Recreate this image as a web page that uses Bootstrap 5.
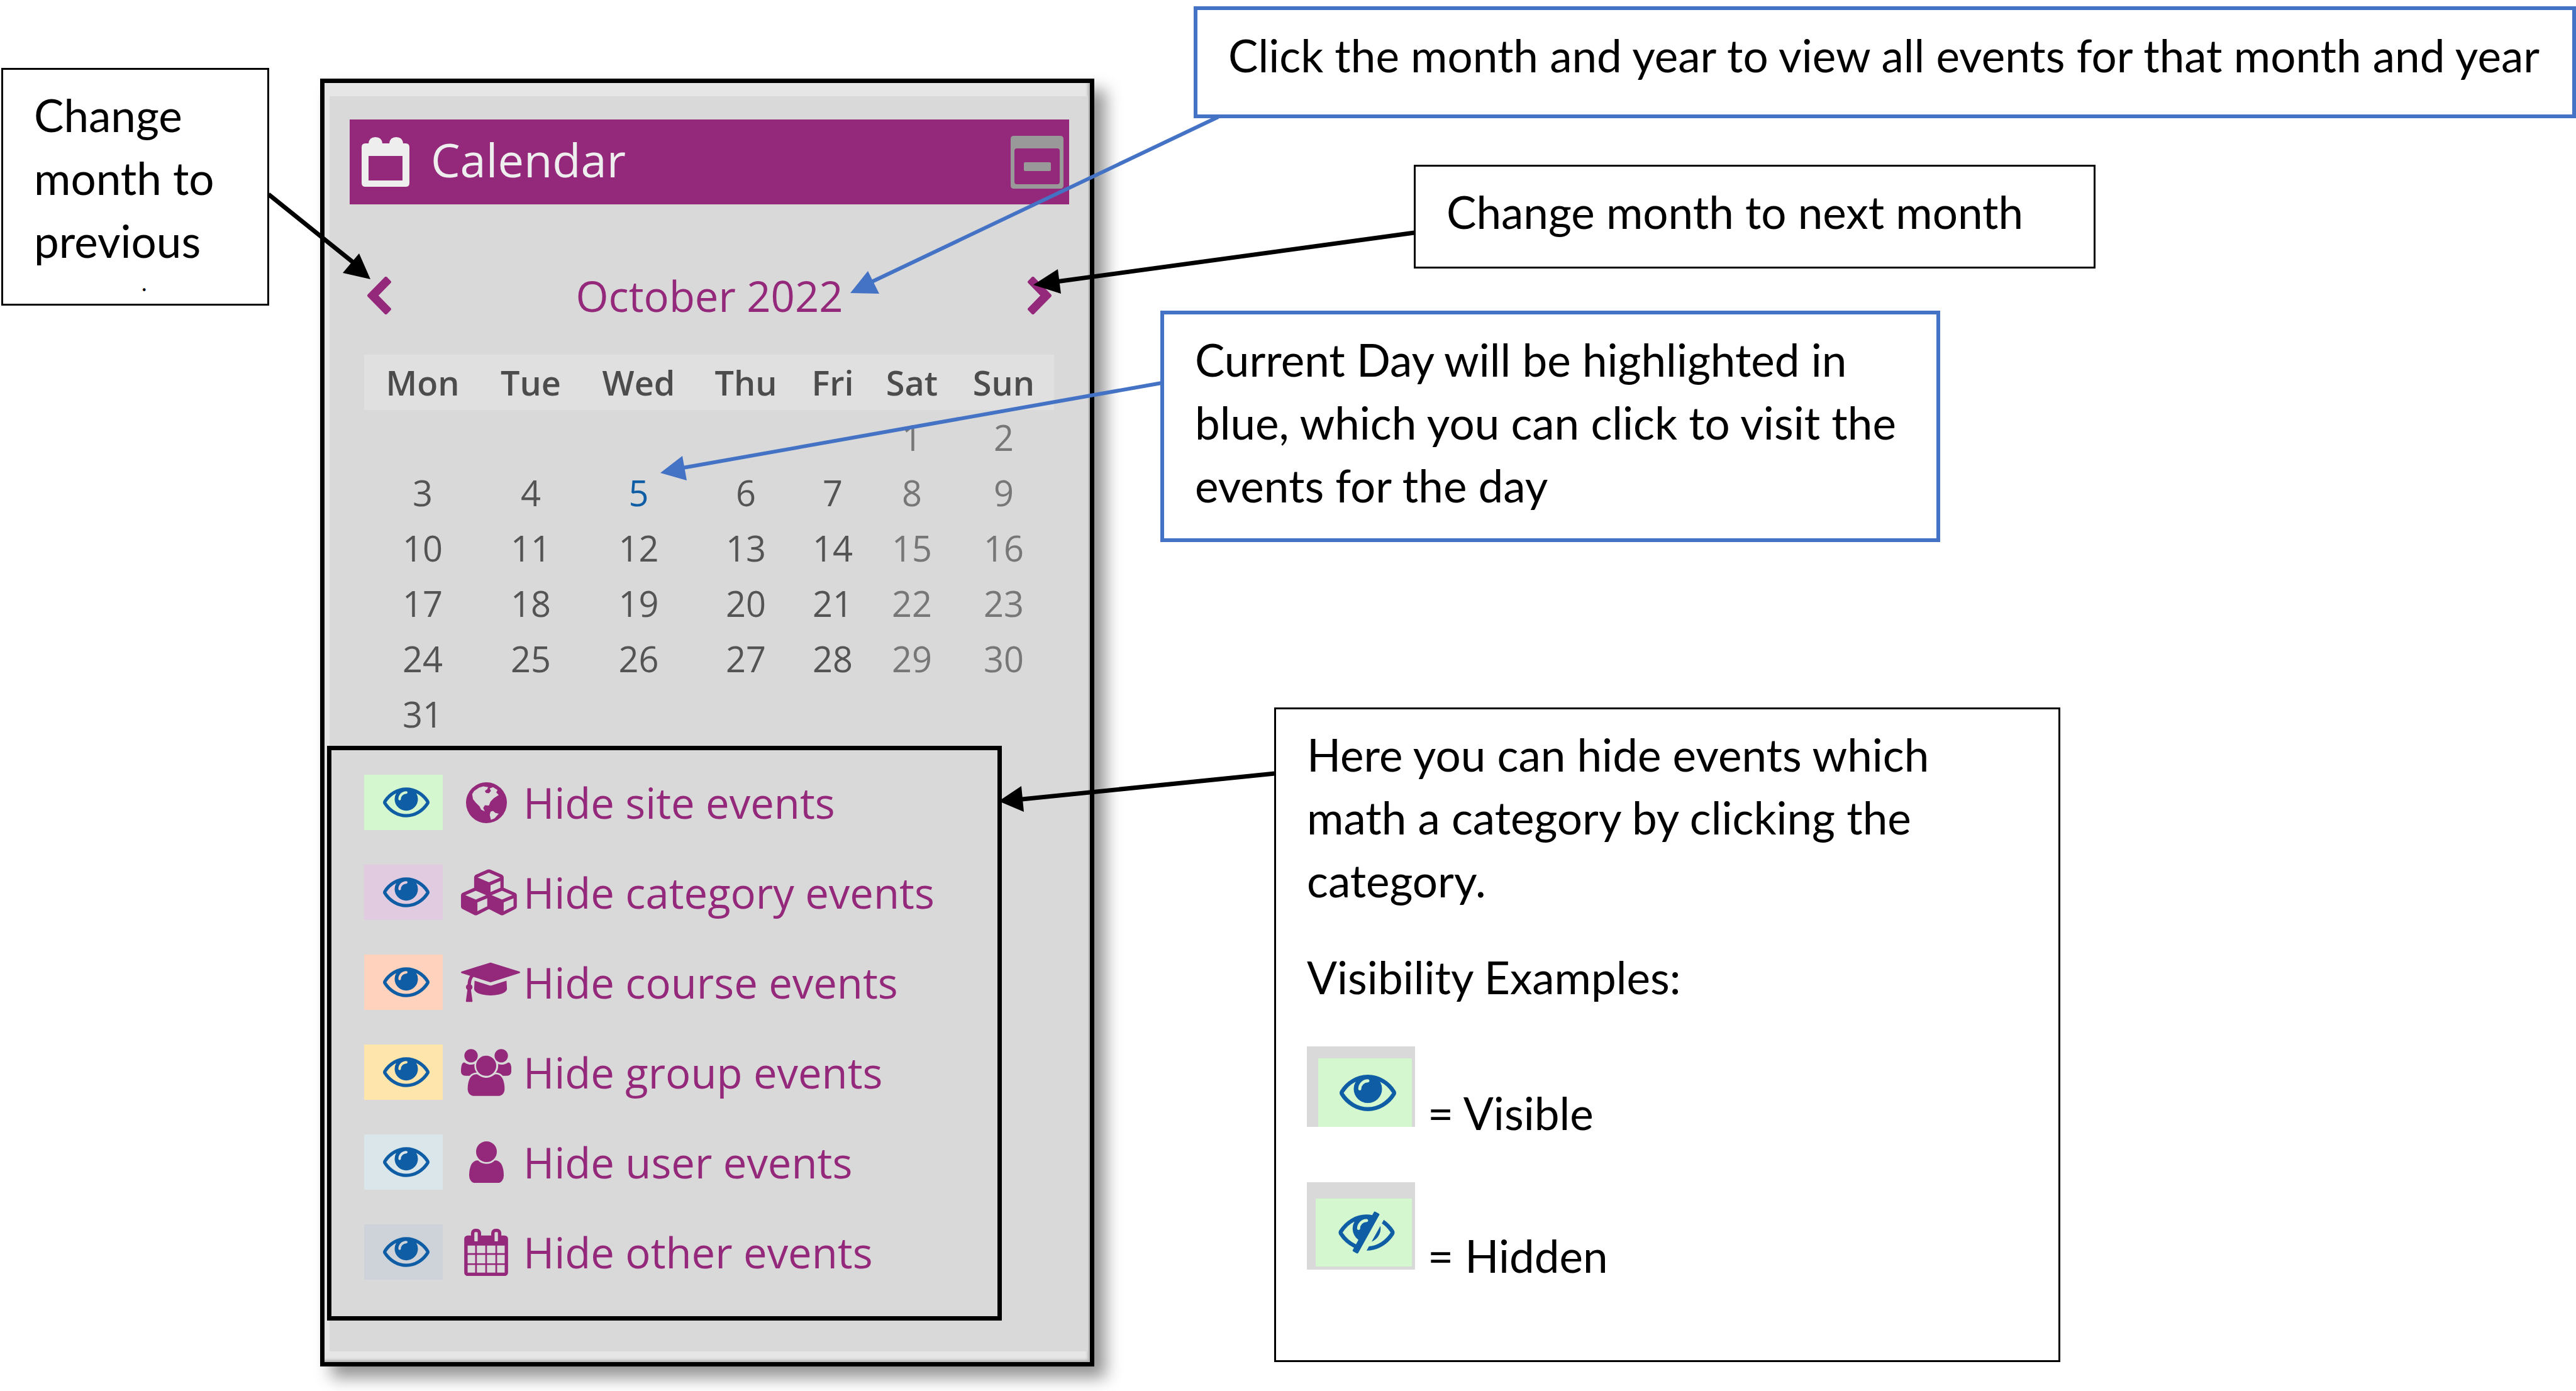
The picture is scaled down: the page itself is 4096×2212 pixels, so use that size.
<!DOCTYPE html>
<html lang="en">
<head>
<meta charset="utf-8">
<meta name="viewport" content="width=device-width, initial-scale=1">
<title>Calendar block guide</title>
<link href="https://cdn.jsdelivr.net/npm/bootstrap@5.3.0/dist/css/bootstrap.min.css" rel="stylesheet">
<style>
  :root { --plum: #94287a; --ink-blue: #4472c4; --eye: #0f5ea5; }
  body { background: #fff; color: #000; font-family: "Open Sans", "Noto Sans", sans-serif; overflow-x: hidden; }
  .guide { min-height: 2212px; }
  svg { display: block; flex-shrink: 0; fill: currentColor; }

  /* callouts */
  .note { background: #fff; border: 3px solid #000; padding: 22px 49px 18px; font-family: Lato, "Liberation Sans", sans-serif; font-size: 71px; line-height: 100px; }
  .note p { margin: 0; }
  .note-blue { border: 6px solid var(--ink-blue); }
  .note-prev { width: 426px; height: 378px; margin: 108px 0 0 2px; }
  .note-prev .cut { font-size: 36px; line-height: 32px; padding-left: 171px; }
  .notes { margin: 10px 0 0 2px; }
  .note-month { margin-left: 156px; height: 178px; white-space: nowrap; }
  .note-next { margin: 74px 0 0 506px; width: 1084px; height: 165px; }
  .note-day { margin: 67px 0 0 103px; width: 1240px; height: 368px; }
  .note-hide { margin: 263px 0 0 284px; width: 1250px; height: 1041px; }
  .note-hide p + p { margin-top: 54px; }
  .sample { margin-top: 60px; gap: 20px; }
  .sample + .sample { margin-top: 88px; }
  .sample-label { margin-bottom: -28px; }
  .thumb { width: 172px; background: #d9d9d9; color: var(--eye); }
  .thumb-on { height: 128px; padding: 19px 5px 0 18px; }
  .thumb-off { height: 139px; padding: 26px 5px 5px 14px; }
  .thumb > span { background: #d5f7cf; padding-left: 8px; }

  /* calendar block */
  .cal { width: 1231px; margin: 125px 0 0 81px; border: 7px solid #000; background: #e6e6e6; padding: 21px 0 17px 8px;
         box-shadow: 18px 18px 24px rgba(0,0,0,.42), inset -3px -3px 4px rgba(0,0,0,.25); }
  .cal-in { background: #d9d9d9; padding: 37px 0 49px; margin-right: 3px; }
  .cal-head { background: var(--plum); color: #eee; height: 135px; margin: 0 30px 0 32px; padding: 0 9px 0 19px; }
  .cal-head h2 { font-size: 74px; line-height: 100px; font-weight: 400; margin: 0 0 0 34px; padding-bottom: 8px; }
  .bare { border: 0; background: none; padding: 0; color: inherit; }
  .fold { color: #999; }
  .month { height: 90px; margin: 100px 58px 49px 60px; font-size: 67px; line-height: 90px; }
  .month a, .kinds a { color: var(--plum); text-decoration: none; }
  .days { width: 1097px; margin: 0 0 0 55px; table-layout: fixed; border-collapse: collapse; text-align: center; font-size: 56px; line-height: 88px; color: #545454; }
  .days th, .days td { height: 88px; padding: 0; }
  .days td { line-height: 86px; vertical-align: top; }
  .days th { font-weight: 600; font-size: 54px; background: #e0e0e0; color: #4c4c4c; }
  .days td:nth-child(n+6) { color: #777; }
  .days a { color: var(--eye); text-decoration: none; }
  .kinds { width: 1073px; border: 7px solid #000; margin: 6px 0 0 -4px; padding: 39px 0 58px 52px; gap: 55px; background: #d9d9d9; }
  .kinds li { height: 88px; font-size: 67px; line-height: 88px; }
  .swatch { width: 125px; height: 88px; padding-left: 9px; color: var(--eye); }
  .glyph { width: 80px; margin: 0 19px 0 29px; justify-content: safe center; color: var(--plum); }
  .k-site { background: #d5f7cf; } .k-cat { background: #e0cbe0; } .k-course { background: #fed2bd; }
  .k-group { background: #fde5ac; } .k-user { background: #dae6e9; } .k-other { background: #ced3d9; }

  .arrows { position: absolute; inset: 0; width: 100%; height: auto; pointer-events: none; }
</style>
</head>
<body>
<svg width="0" height="0" class="position-absolute" aria-hidden="true">
  <symbol id="eye" viewBox="0 384 1792 1152"><path d="M1664 960q-152-236-381-353 61 104 61 225 0 185-131.500 316.500t-316.500 131.500-316.500-131.500-131.500-316.500q0-121 61-225-229 117-381 353 133 205 333.500 326.500t434.500 121.500 434.500-121.500 333.500-326.500zm-720-384q0-20-14-34t-34-14q-125 0-214.500 89.500t-89.500 214.500q0 20 14 34t34 14 34-14 14-34q0-86 61-147t147-61q20 0 34-14t14-34zm848 384q0 34-20 69-140 230-376.500 368.500t-499.500 138.500-499.500-139-376.500-368q-20-35-20-69t20-69q140-229 376.500-368t499.500-139 499.500 139 376.500 368q20 35 20 69z"/></symbol>
  <symbol id="eye-off" viewBox="0 256 1792 1408"><path d="M555 1335l78-141q-87-63-136-159t-49-203q0-121 61-225-229 117-381 353 167 258 427 375zm389-759q0-20-14-34t-34-14q-125 0-214.500 89.500t-89.500 214.500q0 20 14 34t34 14 34-14 14-34q0-86 61-147t147-61q20 0 34-14t14-34zm363-191q0 7-1 9-106 189-316 567t-315 566l-49 89q-10 16-28 16-12 0-134-70-16-10-16-28 0-12 44-87-143-65-263.500-173t-208.500-245q-20-31-20-69t20-69q153-235 380-371t496-136q89 0 180 17l54-97q10-16 28-16 5 0 18 6t31 15.500 33 18.500 31.500 18.500 19.500 11.500q16 10 16 27zm37 447q0 139-79 253.500t-209 164.500l280-502q8 45 8 84zm448 128q0 35-20 69-39 64-109 145-150 172-347.500 267t-419.500 95l74-132q212-18 392.500-137t301.500-307q-115-179-282-294l63-112q95 64 182.500 153t144.500 184q20 34 20 69z"/></symbol>
</svg>

<main class="guide position-relative d-flex align-items-start">
  <aside class="note note-prev flex-shrink-0">
    <p>Change month to previous</p>
    <p class="cut">.</p>
  </aside>

  <section class="cal flex-shrink-0" aria-label="Calendar">
    <div class="cal-in">
      <header class="cal-head d-flex align-items-center">
        <svg width="76" height="79" viewBox="0 0 76 79" aria-hidden="true"><path fill-rule="evenodd" d="M6 10h5q1-10 11-10t11 10h11q1-10 11-10t11 10h4q6 0 6 6v57q0 6-6 6H6q-6 0-6-6V16q0-6 6-6zM11 30v39h54V30z"/></svg>
        <h2>Calendar</h2>
        <button type="button" class="bare fold ms-auto" aria-label="Collapse block">
          <svg width="84" height="84" viewBox="0 0 84 84"><path fill-rule="evenodd" d="M5 0h74q5 0 5 5v74q0 5-5 5H5q-5 0-5-5V5q0-5 5-5zM10 20q-4 0-4 4v49q0 4 4 4h64q4 0 4-4V24q0-4-4-4z"/><rect x="21" y="42" width="43" height="14" rx="2"/></svg>
        </button>
      </header>

      <nav class="month d-flex justify-content-between align-items-center" aria-label="Month">
        <a href="#prev" aria-label="Previous month"><svg width="38" height="60" viewBox="410 32 1036 1600" preserveAspectRatio="none"><path d="M1427 301l-531 531 531 531q19 19 19 45t-19 45l-166 166q-19 19-45 19t-45-19l-742-742q-19-19-19-45t19-45l742-742q19-19 45-19t45 19l166 166q19 19 19 45t-19 45z"/></svg></a>
        <a href="#month">October 2022</a>
        <a href="#next" aria-label="Next month"><svg width="38" height="60" viewBox="346 32 1036 1600" preserveAspectRatio="none"><path d="M1363 877l-742 742q-19 19-45 19t-45-19l-166-166q-19-19-19-45t19-45l531-531-531-531q-19-19-19-45t19-45l166-166q19-19 45-19t45 19l742 742q19 19 19 45t-19 45z"/></svg></a>
      </nav>

      <table class="days">
        <colgroup><col width="186"><col width="158"><col width="185"><col width="156"><col width="120"><col width="132"><col width="160"></colgroup>
        <thead><tr><th scope="col">Mon</th><th scope="col">Tue</th><th scope="col">Wed</th><th scope="col">Thu</th><th scope="col">Fri</th><th scope="col">Sat</th><th scope="col">Sun</th></tr></thead>
        <tbody>
          <tr><td></td><td></td><td></td><td></td><td></td><td>1</td><td>2</td></tr>
          <tr><td>3</td><td>4</td><td><a href="#today">5</a></td><td>6</td><td>7</td><td>8</td><td>9</td></tr>
          <tr><td>10</td><td>11</td><td>12</td><td>13</td><td>14</td><td>15</td><td>16</td></tr>
          <tr><td>17</td><td>18</td><td>19</td><td>20</td><td>21</td><td>22</td><td>23</td></tr>
          <tr><td>24</td><td>25</td><td>26</td><td>27</td><td>28</td><td>29</td><td>30</td></tr>
          <tr><td>31</td><td></td><td></td><td></td><td></td><td></td><td></td></tr>
        </tbody>
      </table>

      <ul class="kinds list-unstyled d-flex flex-column mb-0">
        <li class="d-flex align-items-center">
          <span class="swatch k-site d-flex align-items-center justify-content-center"><svg width="74" height="48"><use href="#eye"/></svg></span>
          <span class="glyph d-flex"><svg width="65" height="65" viewBox="0 0 100 100"><path fill-rule="evenodd" d="M50 0a50 50 0 1 1 0 100a50 50 0 1 1 0-100zM42 10L32 13L20 21L15 29L17 41L24 50L33 59L37 67L46 71L42 63L46 56L56 57L60 47L68 39L80 31L74 25L77 19L66 12L58 15L61 21L56 27L49 26L46 21L52 17L54 12zM60 72L58 80L61 92L70 88L80 77L72 75L66 70z"/></svg></span>
          <a href="#site">Hide site events</a>
        </li>
        <li class="d-flex align-items-center">
          <span class="swatch k-cat d-flex align-items-center justify-content-center"><svg width="74" height="48"><use href="#eye"/></svg></span>
          <span class="glyph d-flex"><svg width="94" height="74" viewBox="0 0 2304 1792"><path d="M640 1632l384-192v-314l-384 164v342zm-64-454l404-173-404-173-404 173zm1088 454l384-192v-314l-384 164v342zm-64-454l404-173-404-173-404 173zm-448-293l384-165v-266l-384 164v267zm-64-379l441-189-441-189-441 189zm1088 518v416q0 36-19 67t-52 47l-448 224q-25 14-57 14t-57-14l-448-224q-4-2-7-4-2 2-7 4l-448 224q-25 14-57 14t-57-14l-448-224q-33-16-52-47t-19-67v-416q0-38 21.500-70t56.500-48l434-186v-400q0-38 21.500-70t56.500-48l448-192q23-10 50-10t50 10l448 192q35 16 56.500 48t21.500 70v400l434 186q36 16 57 48t21 70z"/></svg></span>
          <a href="#category">Hide category events</a>
        </li>
        <li class="d-flex align-items-center">
          <span class="swatch k-course d-flex align-items-center justify-content-center"><svg width="74" height="48"><use href="#eye"/></svg></span>
          <span class="glyph d-flex"><svg width="94" height="74" viewBox="0 0 2304 1792"><path d="M1774 836l18 316q4 69-82 128t-235 93.500-323 34.500-323-34.500-235-93.500-82-128l18-316 574 181q22 7 48 7t48-7zm530-324q0 23-22 31l-1120 352q-4 1-10 1t-10-1l-652-206q-43 34-71 111.500t-34 178.500q63 36 63 109 0 69-58 107l58 433q2 14-8 25-9 11-24 11h-192q-15 0-24-11-10-11-8-25l58-433q-58-38-58-107 0-73 65-111 11-207 98-330l-333-104q-22-8-22-31t22-31l1120-352q4-1 10-1t10 1l1120 352q22 8 22 31z"/></svg></span>
          <a href="#course">Hide course events</a>
        </li>
        <li class="d-flex align-items-center">
          <span class="swatch k-group d-flex align-items-center justify-content-center"><svg width="74" height="48"><use href="#eye"/></svg></span>
          <span class="glyph d-flex"><svg width="80" height="75" viewBox="0 0 1920 1792"><path d="M593 896q-162 5-265 128h-134q-82 0-138-40.500t-56-118.500q0-353 124-353 6 0 43.500 21t97.500 42.500 119 21.500q67 0 133-23-5 37-5 66 0 159 93 256zm1071 637q0 120-73 189.500t-194 69.500h-874q-121 0-194-69.500t-73-189.500q0-53 3.500-103.500t14-109 26.500-108.500 43-97.500 62-81 85.500-53.500 111.500-20q10 0 43 21.500t73 48 107 48 135 21.500 135-21.500 107-48 73-48 43-21.500q61 0 111.500 20t85.500 53.500 62 81 43 97.500 26.500 108.500 14 109 3.500 103.500zm-1024-1277q0 106-75 181t-181 75-181-75-75-181 75-181 181-75 181 75 75 181zm704 384q0 159-112.500 271.500t-271.500 112.500-271.500-112.500-112.500-271.500 112.500-271.500 271.500-112.500 271.500 112.500 112.500 271.500zm576 225q0 78-56 118.500t-138 40.500h-134q-103-123-265-128 93-97 93-256 0-29-5-66 66 23 133 23 59 0 119-21.500t97.500-42.500 43.500-21q124 0 124 353zm-128-609q0 106-75 181t-181 75-181-75-75-181 75-181 181-75 181 75 75 181z"/></svg></span>
          <a href="#group">Hide group events</a>
        </li>
        <li class="d-flex align-items-center">
          <span class="swatch k-user d-flex align-items-center justify-content-center"><svg width="74" height="48"><use href="#eye"/></svg></span>
          <span class="glyph d-flex"><svg width="55" height="66" viewBox="256 128 1280 1536"><path d="M1536 1399q0 109-62.500 187t-150.500 78h-854q-88 0-150.500-78t-62.500-187q0-85 8.500-160.500t31.500-152 58.500-131 94-89 134.500-34.500q131 128 313 128t313-128q76 0 134.500 34.500t94 89 58.500 131 31.500 152 8.500 160.500zm-256-887q0 159-112.500 271.500t-271.500 112.500-271.500-112.500-112.500-271.500 112.500-271.500 271.500-112.500 271.500 112.500 112.500 271.500z"/></svg></span>
          <a href="#user">Hide user events</a>
        </li>
        <li class="d-flex align-items-center">
          <span class="swatch k-other d-flex align-items-center justify-content-center"><svg width="74" height="48"><use href="#eye"/></svg></span>
          <span class="glyph d-flex"><svg width="70" height="75" viewBox="64 0 1664 1792"><path d="M192 1664h288v-288h-288v288zm352 0h320v-288h-320v288zm-352-352h288v-320h-288v320zm352 0h320v-320h-320v320zm-352-384h288v-288h-288v288zm736 736h320v-288h-320v288zm-384-736h320v-288h-320v288zm768 736h288v-288h-288v288zm-384-352h320v-320h-320v320zm-352-864v-288q0-13-9.500-22.500t-22.500-9.500h-64q-13 0-22.500 9.500t-9.500 22.500v288q0 13 9.500 22.500t22.500 9.500h64q13 0 22.500-9.500t9.500-22.500zm736 864h288v-320h-288v320zm-384-384h320v-288h-320v288zm384 0h288v-288h-288v288zm32-480v-288q0-13-9.500-22.500t-22.500-9.500h-64q-13 0-22.500 9.500t-9.500 22.500v288q0 13 9.500 22.500t22.500 9.500h64q13 0 22.500-9.500t9.500-22.500zm384-64v1280q0 52-38 90t-90 38h-1408q-52 0-90-38t-38-90v-1280q0-52 38-90t90-38h128v-96q0-66 47-113t113-47h64q66 0 113 47t47 113v96h384v-96q0-66 47-113t113-47h64q66 0 113 47t47 113v96h128q52 0 90 38t38 90z"/></svg></span>
          <a href="#other">Hide other events</a>
        </li>
      </ul>
    </div>
  </section>

  <div class="notes flex-grow-1 d-flex flex-column">
    <div class="note note-blue note-month"><p>Click the month and year to view all events for that month and year</p></div>
    <div class="note note-next"><p>Change month to next month</p></div>
    <div class="note note-blue note-day"><p>Current Day will be highlighted in blue, which you can click to visit the events for the day</p></div>
    <div class="note note-hide">
      <p>Here you can hide events which math a category by clicking the category.</p>
      <p>Visibility Examples:</p>
      <div class="sample d-flex align-items-end">
        <span class="thumb thumb-on d-flex"><span class="flex-fill d-flex align-items-center justify-content-center"><svg width="90" height="60"><use href="#eye"/></svg></span></span>
        <span class="sample-label">= Visible</span>
      </div>
      <div class="sample d-flex align-items-end">
        <span class="thumb thumb-off d-flex"><span class="flex-fill d-flex align-items-center justify-content-center"><svg width="92" height="70"><use href="#eye-off"/></svg></span></span>
        <span class="sample-label">= Hidden</span>
      </div>
    </div>
  </div>

  <!-- connectors from each callout to the part it explains -->
  <svg class="arrows" viewBox="0 0 4096 2212" aria-hidden="true">
    <g stroke="#000" stroke-width="7"><path d="M427 309L565 420M2249 370L1672 449M2027 1230L1615 1272"/></g>
    <path d="M589 444L571 403L545 434zM1643 453L1682 428L1687 467zM1588 1274L1624 1250L1628 1291z"/>
    <g stroke="#4472c4" stroke-width="6"><path d="M1937 186L1378 452M1847 609L1080 745"/></g>
    <path fill="#4472c4" d="M1352 466L1380 431L1398 467zM1050 752L1085 725L1092 764z"/>
  </svg>
</main>
<script src="https://cdn.jsdelivr.net/npm/bootstrap@5.3.0/dist/js/bootstrap.bundle.min.js"></script>
</body>
</html>
